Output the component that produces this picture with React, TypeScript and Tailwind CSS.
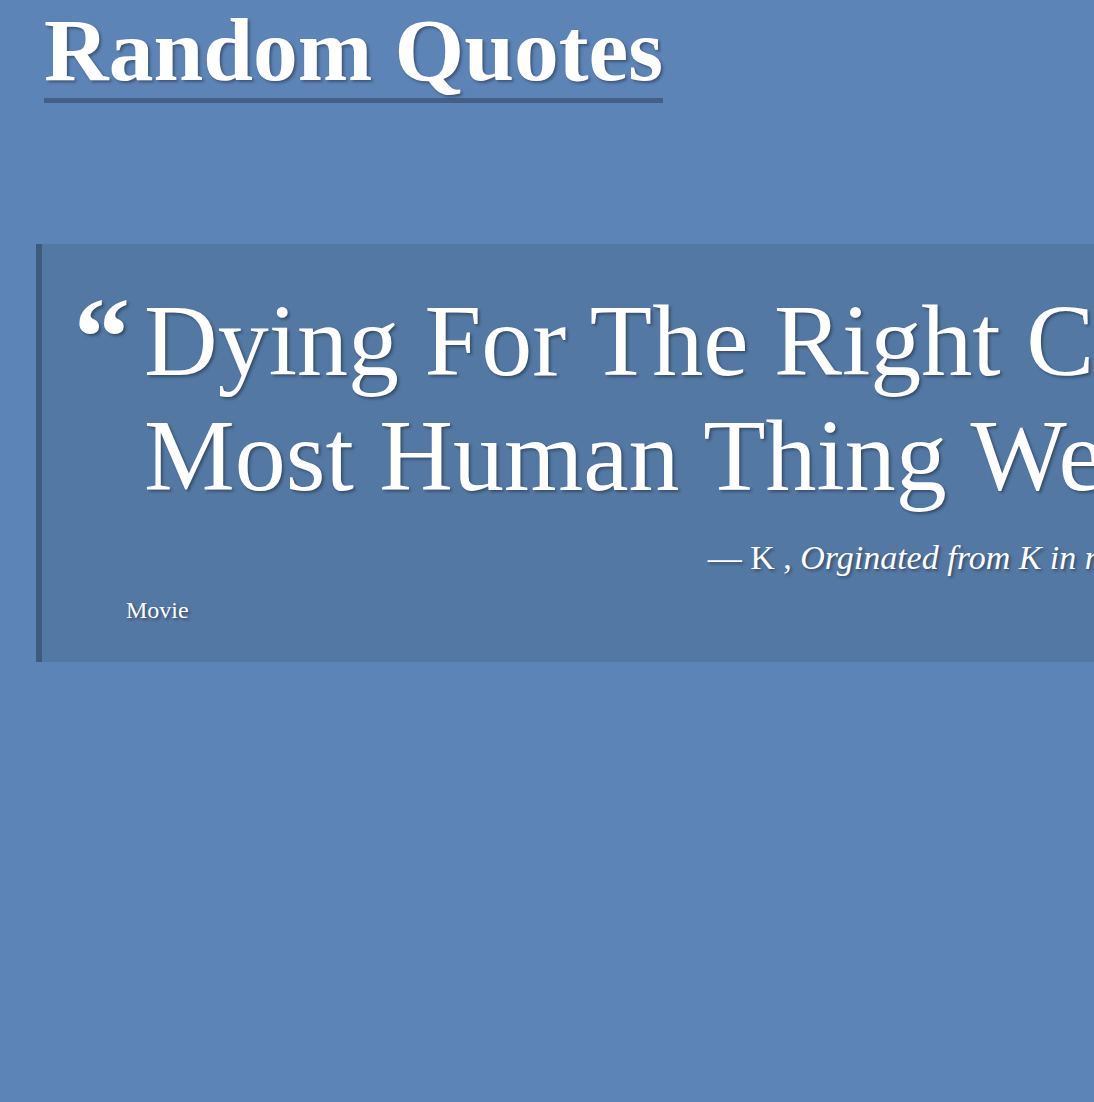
import React from 'react'

const shadow = '[text-shadow:2px_2px_3px_rgba(0,0,0,0.35)]'

export default function App() {
  return (
    <div className="min-h-screen w-full overflow-hidden bg-[#5d84b7] pt-[5px] text-white font-['Liberation_Serif',serif]">
      <div className="pl-[44px]">
        <h1
          className={`inline-block border-b-[5px] border-[#445f87] pb-[3px] text-[89.5px] font-bold leading-none ${shadow}`}
        >
          Random Quotes
        </h1>
      </div>

      <div className="ml-[36px] mt-[141px] w-[1500px] border-l-[6px] border-[#3e5a7f] bg-[#5378a4] pt-[39px] pb-[37px] pl-[34px]">
        <div className="flex items-start">
          <span className={`-ml-[2px] -mt-[3px] w-[70px] shrink-0 text-[112px] font-bold leading-[115px] ${shadow}`}>
            “
          </span>
          <p className={`whitespace-nowrap text-[102px] leading-[115px] ${shadow}`}>
            Dying For The Right Cause Is The
            <br />
            Most Human Thing We Can Do.
          </p>
        </div>
        <div className={`mt-[25px] w-[1090px] text-right text-[34px] leading-[40px] ${shadow}`}>
          — K , <em>Orginated from K in movie</em>
        </div>
        <div className={`mt-[17px] ml-[50px] text-[24px] leading-[30px] ${shadow}`}>Movie</div>
      </div>
    </div>
  )
}
